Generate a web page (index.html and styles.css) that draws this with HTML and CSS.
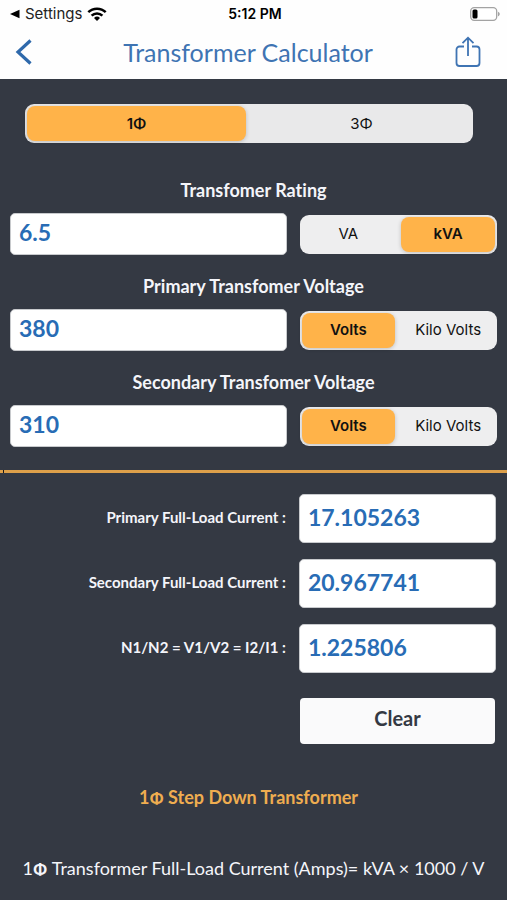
FILE: index.html
```html
<!DOCTYPE html>
<html lang="en">
<head>
<meta charset="utf-8">
<meta name="viewport" content="width=device-width, initial-scale=1">
<title>Transformer Calculator</title>
<link rel="stylesheet" href="styles.css">
</head>
<body>
<header class="top">
  <div class="status">
    <a class="status-back" href="#">
      <svg width="10" height="10" viewBox="0 0 10 10" aria-hidden="true"><path d="M0 5 9.500 .8v8.400z" fill="#000"/></svg>
      <span>Settings</span>
      <svg width="20" height="14" viewBox="0 0 20 14" aria-hidden="true"><g fill="none" stroke="#000" stroke-width="2.500"><path d="M1.300 5.200a12.400 12.400 0 0 1 17.400 0"/><path d="M4.600 8.600a7.700 7.700 0 0 1 10.800 0"/></g><path d="M7 10.900a4.300 4.300 0 0 1 6 0L10 14z" fill="#000"/></svg>
    </a>
    <time class="clock">5:12 PM</time>
    <svg class="battery" width="30" height="14" viewBox="0 0 30 14" aria-hidden="true"><rect x=".7" y=".7" width="26" height="12.600" rx="3.500" fill="#fff" stroke="#a3a3a3" stroke-width="1.300"/><rect x="2.500" y="2.500" width="5" height="9" rx="1.500" fill="#000"/><path d="M28 4.700c2.300.8 2.300 3.800 0 4.600z" fill="#a3a3a3"/></svg>
  </div>
  <nav class="nav">
    <button class="icon-button" type="button" aria-label="Back">
      <svg width="17" height="28" viewBox="0 0 17 28" aria-hidden="true"><path d="M15.500 2.500 3 14l12.500 11.500" fill="none" stroke="#2f69ab" stroke-width="3.200"/></svg>
    </button>
    <h1>Transformer Calculator</h1>
    <button class="icon-button" type="button" aria-label="Share">
      <svg width="26" height="32" viewBox="0 0 26 32" fill="none" stroke="#3f74b3" stroke-width="1.800" aria-hidden="true"><path d="M9 10.500H4.500A3 3 0 0 0 1.500 13.500v13.500a3 3 0 0 0 3 3h17a3 3 0 0 0 3-3V13.500a3 3 0 0 0-3-3H17"/><path d="M13 20V2M7.500 7.200 13 1.700l5.500 5.500"/></svg>
    </button>
  </nav>
</header>
<main>
  <form>
    <fieldset class="segment phase" aria-label="Phase">
      <label><input type="radio" name="phase" checked><span>1Φ</span></label>
      <label><input type="radio" name="phase"><span>3Φ</span></label>
    </fieldset>
    <div class="groups">
      <div class="group">
        <label class="caption" for="rating">Transfomer Rating</label>
        <input class="field" id="rating" type="text" inputmode="decimal" value="6.5">
        <fieldset class="segment" aria-label="Rating unit">
          <label><input type="radio" name="rating-unit"><span>VA</span></label>
          <label><input type="radio" name="rating-unit" checked><span>kVA</span></label>
        </fieldset>
      </div>
      <div class="group">
        <label class="caption" for="primary">Primary Transfomer Voltage</label>
        <input class="field" id="primary" type="text" inputmode="decimal" value="380">
        <fieldset class="segment" aria-label="Primary voltage unit">
          <label><input type="radio" name="primary-unit" checked><span>Volts</span></label>
          <label><input type="radio" name="primary-unit"><span>Kilo Volts</span></label>
        </fieldset>
      </div>
      <div class="group">
        <label class="caption" for="secondary">Secondary Transfomer Voltage</label>
        <input class="field" id="secondary" type="text" inputmode="decimal" value="310">
        <fieldset class="segment" aria-label="Secondary voltage unit">
          <label><input type="radio" name="secondary-unit" checked><span>Volts</span></label>
          <label><input type="radio" name="secondary-unit"><span>Kilo Volts</span></label>
        </fieldset>
      </div>
    </div>
    <hr>
    <div class="results">
      <label for="primary-current">Primary Full-Load Current :</label>
      <input class="field" id="primary-current" type="text" value="17.105263" readonly>
      <label for="secondary-current">Secondary Full-Load Current :</label>
      <input class="field" id="secondary-current" type="text" value="20.967741" readonly>
      <label for="ratio">N1/N2 = V1/V2 = I2/I1 :</label>
      <input class="field" id="ratio" type="text" value="1.225806" readonly>
      <button class="clear" type="button">Clear</button>
    </div>
  </form>
  <p class="kind">1<span class="phi">Φ</span> Step Down Transformer</p>
  <p class="formula">1<b class="phi">Φ</b> Transformer Full-Load Current (Amps)= kVA × 1000 / V</p>
</main>
</body>
</html>
```

FILE: styles.css
```css
* { box-sizing: border-box; }

body {
  margin: 0;
  min-height: 100vh;
  background: #343943;
  color: #f4f5fa;
  font-family: Lato, "Liberation Sans", sans-serif;
  font-variant-ligatures: none;
}

button, input { font-family: inherit; }

fieldset { margin: 0; border: 0; min-width: 0; }

.top { background: #fefefe; color: #000; }

.status {
  display: grid;
  grid-template-columns: 1fr auto 1fr;
  align-items: center;
  height: 28px;
  padding: 0 7px 0 10px;
  font: 15px/20px Inter, sans-serif;
}

.status-back {
  display: flex;
  align-items: center;
  gap: 5px;
  color: #222;
  text-decoration: none;
}

.clock { font-size: 14px; font-weight: 600; }

.battery { justify-self: end; }

.nav {
  display: grid;
  grid-template-columns: 1fr auto 1fr;
  align-items: center;
  height: 51px;
  padding: 0 26px 4px 15px;
}

.nav h1 {
  margin: 0;
  color: #3f74b3;
  font-size: 25px;
  line-height: 32px;
  font-weight: 400;
}

.icon-button {
  display: flex;
  justify-self: start;
  padding: 0;
  border: 0;
  background: none;
}

.icon-button:last-child { justify-self: end; }

.segment {
  display: grid;
  grid-template-columns: 1fr 1fr;
  gap: 6px;
  height: 39px;
  padding: 2px;
  border-radius: 9px;
  background: #eeeeef;
  color: #111;
  font: 15px/20px Inter, sans-serif;
}

.segment label { display: grid; position: relative; }

.segment input {
  position: absolute;
  inset: 0;
  margin: 0;
  opacity: 0;
}

.segment span {
  display: grid;
  place-items: center;
  border-radius: 8px;
}

.segment input:checked + span {
  background: #ffb349;
  box-shadow: 0 1px 4px #0003;
  font-weight: 600;
}

.phase { margin: 25px 34px 0 25px; background: #e9e9ea; }

.groups {
  display: grid;
  gap: 19px;
  margin: 35px 10px 0;
}

.group {
  display: grid;
  grid-template-columns: 7fr 5fr;
  gap: 11px 13px;
  align-items: center;
}

.caption {
  grid-column: 1 / -1;
  text-align: center;
  font-size: 18px;
  line-height: 24px;
  font-weight: 700;
}

.field {
  width: 100%;
  min-width: 0;
  height: 42px;
  padding: 0 8px 4px;
  border: 1px solid #c8cacd;
  border-radius: 5px;
  background: #fff;
  color: #286cb5;
  font-size: 23px;
  font-weight: 700;
}

hr {
  height: 3px;
  margin: 23px 0 21px;
  border: 0;
  background: linear-gradient(90deg, #dda04a 3px, #15161a 3px 4px, #dda04a 4px);
}

.results {
  display: grid;
  grid-template-columns: 7fr 5fr;
  gap: 16px 13px;
  align-items: center;
  margin: 0 11px 0 10px;
}

.results label {
  padding-bottom: 4px;
  text-align: right;
  font-size: 15px;
  line-height: 20px;
  font-weight: 700;
}

.results .field { height: 49px; }

.clear {
  grid-column: 2;
  height: 46px;
  margin: 9px 1px 0;
  padding: 0 0 6px;
  border: 0;
  border-radius: 4px;
  background: #fafafb;
  color: #343943;
  font-size: 20px;
  font-weight: 700;
}

.kind, .formula {
  text-align: center;
  font-size: 18px;
  line-height: 24px;
}

.kind { margin: 41px 20px 0 10px; color: #efad50; font-weight: 700; }

.formula { margin: 46px 10px 0; }

.phi { font-family: Inter, sans-serif; font-size: 16px; }
```
